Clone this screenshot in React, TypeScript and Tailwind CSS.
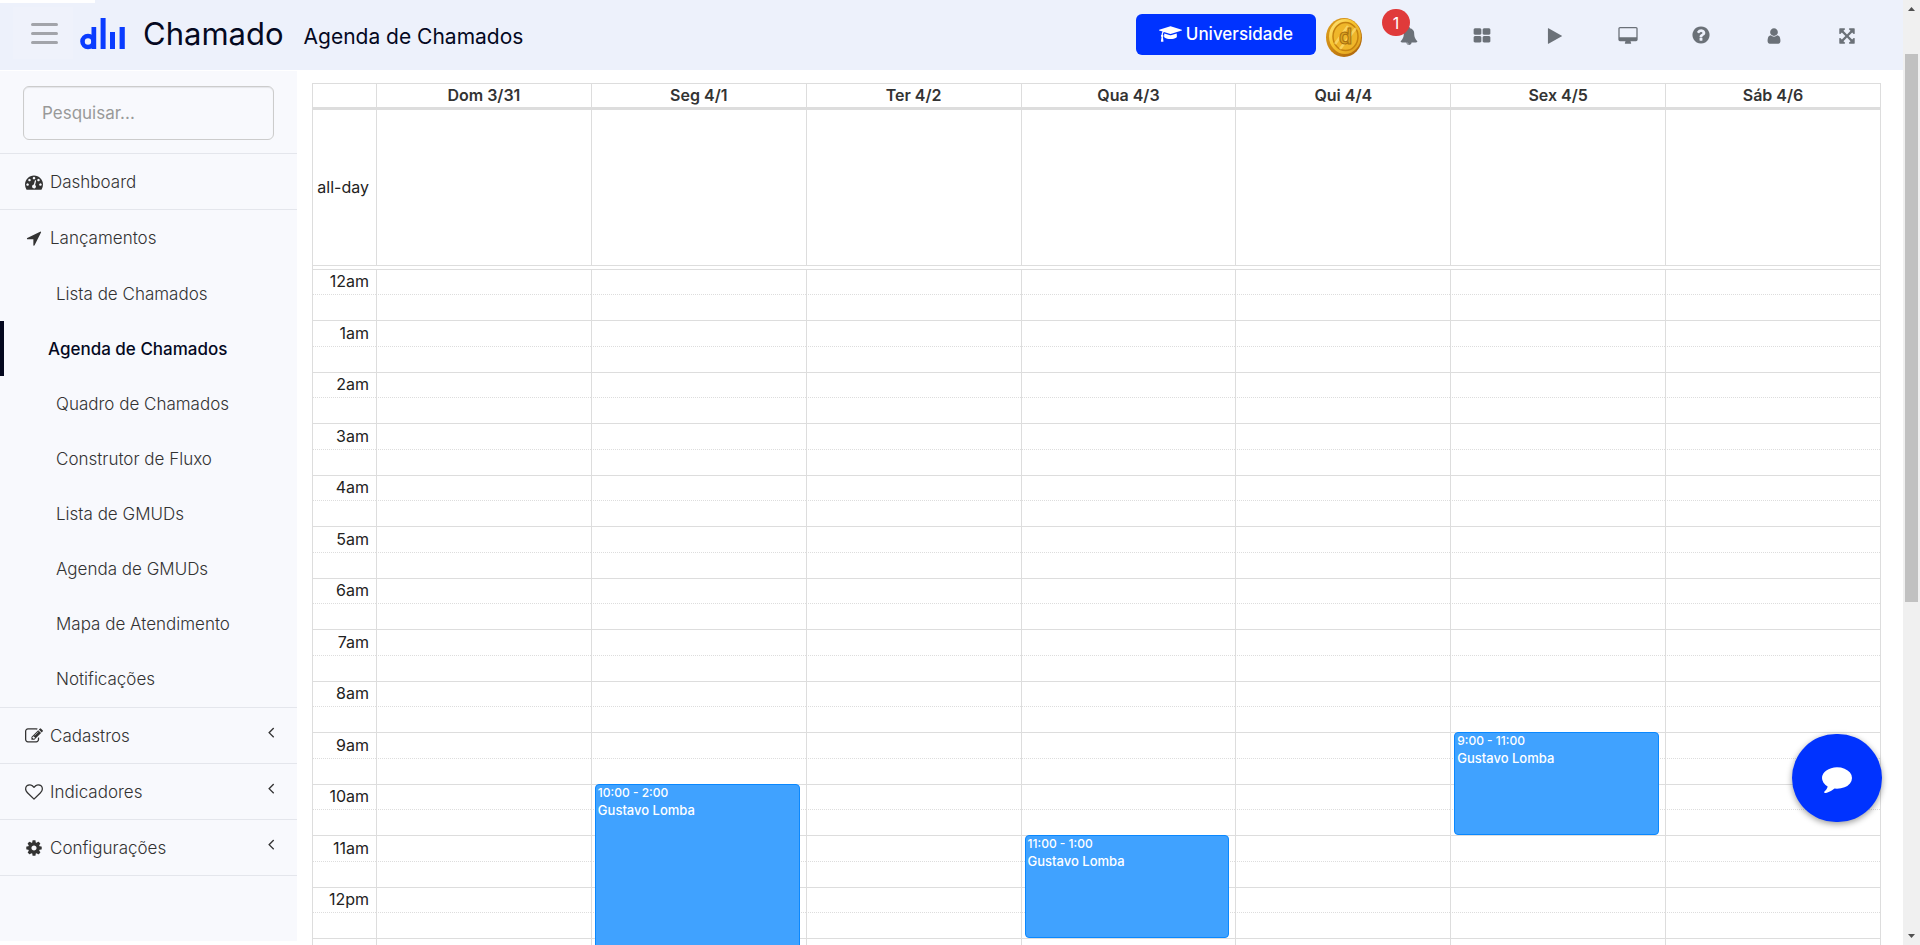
import type { ReactNode } from "react";
import clsx from "clsx";

type IconProps = { d: string; viewBox?: string; className?: string };

function Icon({ d, viewBox = "0 0 1792 1792", className = "size-[18px]" }: IconProps) {
  return (
    <svg viewBox={viewBox} className={clsx("shrink-0 fill-current", className)} aria-hidden="true">
      <path d={d} />
    </svg>
  );
}

const icons = {
  cap: "M1774 836l18 316q4 69-82 128t-235 93.5-323 34.5-323-34.5-235-93.5-82-128l18-316 574 181q22 7 48 7t48-7zm530-324q0 23-22 31l-1120 352q-4 1-10 1t-10-1l-652-206q-43 34-71 111.5t-34 178.5q63 36 63 109 0 69-58 107l58 433q2 14-8 25-9 11-24 11h-192q-15 0-24-11-10-11-8-25l58-433q-58-38-58-107 0-73 65-111 11-207 98-330l-333-104q-22-8-22-31t22-31l1120-352q4-1 10-1t10 1l1120 352q22 8 22 31z",
  bell: "M912 1696q0-16-16-16-59 0-101.5-42.5t-42.5-101.5q0-16-16-16t-16 16q0 73 51.5 124.5t124.5 51.5q16 0 16-16zm816-288q0 52-38 90t-90 38h-448q0 106-75 181t-181 75-181-75-75-181h-448q-52 0-90-38t-38-90q50-42 91-88t85-119.5 74.5-158.5 50-206 19.5-260q0-152 117-282.5t307-158.5q-8-19-8-39 0-40 28-68t68-28 68 28 28 68q0 20-8 39 190 28 307 158.5t117 282.5q0 139 19.5 260t50 206 74.5 158.5 85 119.5 91 88z",
  grid: "M832 1024v384q0 52-38 90t-90 38h-512q-52 0-90-38t-38-90v-384q0-52 38-90t90-38h512q52 0 90 38t38 90zm0-768v384q0 52-38 90t-90 38h-512q-52 0-90-38t-38-90v-384q0-52 38-90t90-38h512q52 0 90 38t38 90zm896 768v384q0 52-38 90t-90 38h-512q-52 0-90-38t-38-90v-384q0-52 38-90t90-38h512q52 0 90 38t38 90zm0-768v384q0 52-38 90t-90 38h-512q-52 0-90-38t-38-90v-384q0-52 38-90t90-38h512q52 0 90 38t38 90z",
  play: "M1576 927l-1328 738q-23 13-39.5 3t-16.5-36v-1472q0-26 16.5-36t39.5 3l1328 738q23 13 23 31t-23 31z",
  desktop: "M1728 992v-832q0-13-9.5-22.5t-22.5-9.5h-1600q-13 0-22.5 9.5t-9.5 22.5v832q0 13 9.5 22.5t22.5 9.5h1600q13 0 22.5-9.5t9.5-22.5zm128-832v1088q0 66-47 113t-113 47h-544q0 37 16 77.5t32 71 16 43.5q0 26-19 45t-45 19h-512q-26 0-45-19t-19-45q0-14 16-44t32-70 16-78h-544q-66 0-113-47t-47-113v-1088q0-66 47-113t113-47h1600q66 0 113 47t47 113z",
  help: "M1024 1376v-192q0-14-9-23t-23-9h-192q-14 0-23 9t-9 23v192q0 14 9 23t23 9h192q14 0 23-9t9-23zm256-672q0-88-55.5-163t-138.5-116-170-41q-243 0-371 213-15 24 8 42l132 100q7 6 19 6 16 0 25-12 53-68 86-92 34-24 86-24 48 0 85.5 26t37.5 59q0 38-20 61t-68 45q-63 28-115.5 86.5t-52.5 125.5v36q0 14 9 23t23 9h192q14 0 23-9t9-23q0-19 21.5-49.5t54.5-49.5q32-18 49-28.5t46-35 44.5-48 28-60.5 12.5-81zm384 192q0 209-103 385.5t-279.5 279.5-385.5 103-385.5-103-279.5-279.5-103-385.5 103-385.5 279.5-279.5 385.5-103 385.5 103 279.5 279.5 103 385.5z",
  user: "M1536 1399q0 109-62.5 187t-150.5 78h-854q-88 0-150.5-78t-62.5-187q0-85 8.5-160.5t31.5-152 58.5-131 94-89 134.5-34.5q131 128 313 128t313-128q76 0 134.5 34.5t94 89 58.5 131 31.5 152 8.5 160.5zm-256-887q0 159-112.5 271.5t-271.5 112.5-271.5-112.5-112.5-271.5 112.5-271.5 271.5-112.5 271.5 112.5 112.5 271.5z",
  expand: "M1411 541l-355 355 355 355 144-144q29-31 70-14 39 17 39 59v448q0 26-19 45t-45 19h-448q-42 0-59-40-17-39 14-69l144-144-355-355-355 355 144 144q31 30 14 69-17 40-59 40h-448q-26 0-45-19t-19-45v-448q0-42 40-59 39-17 69 14l144 144 355-355-355-355-144 144q-19 19-45 19-12 0-24-5-40-17-40-59v-448q0-26 19-45t45-19h448q42 0 59 40 17 39-14 69l-144 144 355 355 355-355-144-144q-31-30-14-69 17-40 59-40h448q26 0 45 19t19 45v448q0 42-39 59-13 5-25 5-26 0-45-19z",
  gauge: "M384 1152q0-53-37.5-90.5t-90.5-37.5-90.5 37.5-37.5 90.5 37.5 90.5 90.5 37.5 90.5-37.5 37.5-90.5zm192-448q0-53-37.5-90.5t-90.5-37.5-90.5 37.5-37.5 90.5 37.5 90.5 90.5 37.5 90.5-37.5 37.5-90.5zm428 481l101-382q6-26-7.5-48.5t-38.5-29.5-48 6.5-30 39.5l-101 382q-60 5-107 43.5t-63 98.5q-20 77 20 146t117 89 146-20 89-117q16-60-6-117t-72-91zm660-33q0-53-37.5-90.5t-90.5-37.5-90.5 37.5-37.5 90.5 37.5 90.5 90.5 37.5 90.5-37.5 37.5-90.5zm-640-640q0-53-37.5-90.5t-90.5-37.5-90.5 37.5-37.5 90.5 37.5 90.5 90.5 37.5 90.5-37.5 37.5-90.5zm448 192q0-53-37.5-90.5t-90.5-37.5-90.5 37.5-37.5 90.5 37.5 90.5 90.5 37.5 90.5-37.5 37.5-90.5zm320 448q0 261-141 483-19 29-54 29h-1402q-35 0-54-29-141-221-141-483 0-182 71-348t191-286 286-191 348-71 348 71 286 191 191 286 71 348z",
  arrow: "M1593 349l-640 1280q-17 35-57 35-5 0-15-2-22-5-35.5-22.5t-13.5-39.5v-576h-576q-22 0-39.5-13.5t-22.5-35.5 4-42 29-30l1280-640q13-7 29-7 27 0 45 19 15 14 18.5 34.5t-6.5 39.5z",
  edit: "M888 1184l116-116-152-152-116 116v56h96v96h56zm440-720q-16-16-33 1l-350 350q-17 17-1 33t33-1l350-350q17-17 1-33zm80 594v190q0 119-84.5 203.5t-203.5 84.5h-832q-119 0-203.5-84.5t-84.5-203.5v-832q0-119 84.5-203.5t203.5-84.5h832q63 0 117 25 15 7 18 23 3 17-9 29l-49 49q-14 14-32 8-23-6-45-6h-832q-66 0-113 47t-47 113v832q0 66 47 113t113 47h832q66 0 113-47t47-113v-126q0-13 9-22l64-64q15-15 35-7t20 29zm-96-738l288 288-672 672h-288v-288zm444 132l-92 92-288-288 92-92q28-28 68-28t68 28l152 152q28 28 28 68t-28 68z",
  heart: "M1664 596q0-81-21.5-143t-55-98.5-81.5-59.5-94-31-98-8-112 25.5-110.5 64-86.5 72-60 61.5q-18 22-49 22t-49-22q-24-28-60-61.5t-86.5-72-110.5-64-112-25.5-98 8-94 31-81.5 59.5-55 98.5-21.5 143q0 168 187 355l581 560 580-559q188-188 188-356zm128 0q0 221-229 450l-623 600q-18 18-44 18t-44-18l-624-602q-10-8-27.5-26t-55.5-65.5-68-97.5-53.5-121-23.5-138q0-220 127-344t351-124q62 0 126.5 21.5t120 58 95.5 68.5 76 68q36-36 76-68t95.5-68.5 120-58 126.5-21.5q224 0 351 124t127 344z",
  cog: "M1152 896q0-106-75-181t-181-75-181 75-75 181 75 181 181 75 181-75 75-181zm512-109v222q0 12-8 23t-20 13l-185 28q-19 54-39 91 35 50 107 138 10 12 10 25t-9 23q-27 37-99 108t-94 71q-12 0-26-9l-138-108q-44 23-91 38-16 136-29 186-7 28-36 28h-222q-14 0-24.5-8.5t-11.5-21.5l-28-184q-49-16-90-37l-141 107q-10 9-25 9-14 0-25-11-126-114-165-168-7-10-7-23 0-12 8-23 15-21 51-66.5t54-70.5q-27-50-41-99l-183-27q-13-2-21-12.5t-8-23.5v-222q0-12 8-23t19-13l186-28q14-46 39-92-40-57-107-138-10-12-10-24 0-10 9-23 26-36 98.5-107.5t94.5-71.5q13 0 26 10l138 107q44-23 91-38 16-136 29-186 7-28 36-28h222q14 0 24.5 8.5t11.5 21.5l28 184q49 16 90 37l142-107q9-9 24-9 13 0 25 10 129 119 165 170 7 8 7 22 0 12-8 23-15 21-51 66.5t-54 70.5q26 50 41 98l183 28q13 2 21 12.5t8 23.5z",
  angleLeft: "M1203 544q0 13-10 23l-393 393 393 393q10 10 10 23t-10 23l-50 50q-10 10-23 10t-23-10l-466-466q-10-10-10-23t10-23l466-466q10-10 23-10t23 10l50 50q10 10 10 23z",
  comment: "M1792 896q0 174-120 321.5t-326 233-450 85.5q-70 0-145-8-198 175-460 242-49 14-114 22-17 2-30.5-9t-17.5-29v-1q-3-4-.5-12t2-10 4.5-9.5l6-9 7-8.5 8-9q7-8 31-34.5t34.5-38 31-39.5 32.5-51 27-59 26-76q-157-89-247.5-220t-90.5-281q0-130 71-248.5t191-204.5 286-136.5 348-50.5q244 0 450 85.5t326 233 120 321.5z",
};

const days = ["Dom 3/31", "Seg 4/1", "Ter 4/2", "Qua 4/3", "Qui 4/4", "Sex 4/5", "Sáb 4/6"];

const events = [
  { day: 1, start: 10, hours: 4, time: "10:00 - 2:00", title: "Gustavo Lomba" },
  { day: 3, start: 11, hours: 2, time: "11:00 - 1:00", title: "Gustavo Lomba" },
  { day: 5, start: 9, hours: 2, time: "9:00 - 11:00", title: "Gustavo Lomba" },
];

// half-hour slots, the last one only closes the 12pm row
const slots = Array.from({ length: 27 }, (_, i) => i);

// two hours of slots take 103px
const slotHeights = ["h-[25px]", "h-[26px]", "h-[26px]", "h-[26px]"];

const launches = [
  "Lista de Chamados",
  "Agenda de Chamados",
  "Quadro de Chamados",
  "Construtor de Fluxo",
  "Lista de GMUDs",
  "Agenda de GMUDs",
  "Mapa de Atendimento",
  "Notificações",
];

const actions = [
  { label: "Painel", d: icons.grid },
  { label: "Iniciar", d: icons.play },
  { label: "Monitor", d: icons.desktop, viewBox: "-64 0 1920 1792", size: "h-[18px] w-[20px]" },
  { label: "Ajuda", d: icons.help, size: "size-5 mb-0.5" },
  { label: "Perfil", d: icons.user },
  { label: "Tela cheia", d: icons.expand },
];

function hourLabel(h: number) {
  return `${h % 12 || 12}${h < 12 ? "am" : "pm"}`;
}

function Logo() {
  return (
    <svg viewBox="0 0 46 34" className="h-[34px] w-[46px]" aria-hidden="true">
      <circle cx="8" cy="24.5" r="5.5" fill="none" stroke="#0a3cff" strokeWidth="4.6" />
      <path d="M11.5 10h4.7v22h-4.7zM20.6 1h5v31h-5zM30 15h5v17h-5zM39.6 10h5.2v22h-5.2z" fill="#0a3cff" />
    </svg>
  );
}

function Coin() {
  return (
    <svg viewBox="0 0 36 40" className="h-10 w-9" aria-hidden="true">
      <defs>
        <linearGradient id="coin-rim" x1="0" y1="0" x2="1" y2="1">
          <stop offset="0" stopColor="#e3a51f" />
          <stop offset="0.5" stopColor="#c98313" />
          <stop offset="1" stopColor="#a8600a" />
        </linearGradient>
        <linearGradient id="coin-face" x1="0" y1="0" x2="1" y2="1">
          <stop offset="0" stopColor="#ffe98a" />
          <stop offset="0.4" stopColor="#f8c630" />
          <stop offset="1" stopColor="#dd9a1c" />
        </linearGradient>
      </defs>
      <ellipse cx="18" cy="20.5" rx="18" ry="19.5" fill="url(#coin-rim)" />
      <ellipse cx="19" cy="19.5" rx="16" ry="17.5" fill="url(#coin-face)" />
      <ellipse cx="19.5" cy="19.5" rx="12.5" ry="14" fill="#efb62a" stroke="#c5820f" strokeWidth="1.5" />
      <path d="M9 27l13-18M14 32l16-21" stroke="#ffe680" strokeWidth="2.5" opacity="0.6" />
      <text x="19.5" y="27" textAnchor="middle" fontFamily="Inter, sans-serif" fontSize="21" fontWeight="600" fill="#dca321" stroke="#a8700e" strokeWidth="1">
        d
      </text>
    </svg>
  );
}

function Header() {
  return (
    <header className="relative flex h-[70px] shrink-0 items-center bg-[#edf1fb] pl-[13px] pr-5 text-[#05091f]">
      <span className="absolute left-0 top-0 h-[3px] w-[95px] bg-white" />
      <button aria-label="Menu" className="mb-1 flex h-[52px] w-[60px] flex-col justify-center gap-1.5 bg-[#eff2fb] pl-[18px]">
        <span className="h-[3px] w-[27px] rounded-full bg-[#a2a4aa]" />
        <span className="h-[3px] w-[27px] rounded-full bg-[#a2a4aa]" />
        <span className="h-[3px] w-[27px] rounded-full bg-[#a2a4aa]" />
      </button>
      <a href="#" className="mb-0.5 ml-[7px] flex items-center gap-[17px]">
        <Logo />
        <span className="text-[31px] leading-10">Chamado</span>
      </a>
      <h1 className="ml-5 pt-1 text-[21px] leading-8">Agenda de Chamados</h1>

      <div className="ml-auto flex h-full items-center">
        <button className="mb-0.5 flex h-[41px] items-center gap-1 rounded-md bg-[#0033ff] px-[23px] text-[17px] font-medium text-white">
          <Icon d={icons.cap} viewBox="0 0 2304 1792" className="h-[18px] w-[23px]" />
          <span className="pt-0.5">Universidade</span>
        </button>
        <button aria-label="Moedas" className="mx-2.5 pt-1">
          <Coin />
        </button>
        <button aria-label="Notificações" className="relative flex h-full w-[73px] items-center justify-center pt-0.5 text-[#6b7178]">
          <Icon d={icons.bell} />
          <span className="absolute left-2.5 top-[9px] flex h-[27px] w-7 items-center justify-center rounded-full bg-[#e03a3a] text-base text-white">
            1
          </span>
        </button>
        {actions.map((a) => (
          <button key={a.label} aria-label={a.label} className="flex h-full w-[73px] items-center justify-center pt-0.5 text-[#6b7178]">
            <Icon d={a.d} viewBox={a.viewBox} className={a.size} />
          </button>
        ))}
      </div>
    </header>
  );
}

function MenuItem({ icon, label, chevron, children }: { icon: string; label: string; chevron?: boolean; children?: ReactNode }) {
  return (
    <li className="border-b border-[#e4e6ec]">
      <a href="#" className="flex h-[55px] items-center gap-[7px] pl-[25px] pr-[17px]">
        <Icon d={icon} />
        <span className="pt-0.5">{label}</span>
        {chevron && <Icon d={icons.angleLeft} className="mb-2 ml-auto size-[18px]" />}
      </a>
      {children}
    </li>
  );
}

function Sidebar() {
  return (
    <aside className="mb-1 mt-px w-[297px] shrink-0 bg-[#f8f9fd] text-[17px] font-light text-[#333]">
      <div className="border-b border-[#e4e6ec] px-[23px] pb-[13px] pt-[15px]">
        <input
          type="text"
          aria-label="Pesquisar"
          placeholder="Pesquisar..."
          className="h-[54px] w-full rounded-md border border-[#ccc] bg-transparent px-[18px] font-normal shadow-[inset_0_1px_1px_rgba(0,0,0,0.08)] placeholder:text-[#999]"
        />
      </div>
      <nav>
        <ul>
          <MenuItem icon={icons.gauge} label="Dashboard" />
          <MenuItem icon={icons.arrow} label="Lançamentos">
            <ul className="py-px">
              {launches.map((item, i) => (
                <li key={item}>
                  <a
                    href="#"
                    className={clsx(
                      "flex h-[55px] items-center pt-0.5",
                      i === 1 ? "border-l-4 border-[#05091f] pl-11 font-medium text-[#05091f]" : "pl-14"
                    )}
                  >
                    {item}
                  </a>
                </li>
              ))}
            </ul>
          </MenuItem>
          <MenuItem icon={icons.edit} label="Cadastros" chevron />
          <MenuItem icon={icons.heart} label="Indicadores" chevron />
          <MenuItem icon={icons.cog} label="Configurações" chevron />
        </ul>
      </nav>
    </aside>
  );
}

function Calendar() {
  return (
    <table className="w-full table-fixed border-separate border-spacing-0 border-r border-[#ddd] text-base text-[#222]">
      <colgroup>
        <col className="w-16" />
        {days.map((d) => (
          <col key={d} />
        ))}
      </colgroup>
      <thead>
        <tr>
          <td className="h-6 border-l border-t border-[#ddd] p-0" />
          {days.map((d) => (
            <th key={d} scope="col" className="h-6 border-l border-t border-[#ddd] p-0 pb-0.5 font-semibold leading-5 text-[#333]">
              {d}
            </th>
          ))}
        </tr>
      </thead>
      <tbody>
        <tr>
          <th scope="row" className="h-[158px] border-l border-t-3 border-[#ddd] p-0 pb-0.5 pr-[7px] text-right font-normal">
            all-day
          </th>
          {days.map((d) => (
            <td key={d} className="border-l border-t-3 border-[#ddd] p-0" />
          ))}
        </tr>
        <tr>
          <td colSpan={8} className="h-1 border-l border-t border-[#ddd] p-0" />
        </tr>
        {slots.map((s) => {
          const half = s % 2 === 1;
          const cell = clsx("border-l border-t border-[#ddd] p-0", half && "[border-top-style:dotted]");
          return (
            <tr key={s}>
              <th scope="row" className={clsx(cell, slotHeights[s % 4], "pb-0.5 pr-[7px] text-right font-normal leading-[22px]")}>
                {!half && s < 26 && hourLabel(s / 2)}
              </th>
              {days.map((d, col) => {
                const ev = events.find((e) => e.day === col && e.start * 2 === s);
                return (
                  <td key={d} className={clsx(cell, "relative")}>
                    {ev && (
                      <a
                        href="#"
                        className="absolute -top-px left-[3px] right-[6px] z-10 rounded border border-[#0a88ff] bg-[#40a2ff] px-0.5 font-medium text-white"
                        style={{ height: Math.round(ev.hours * 51.5) }}
                      >
                        <span className="block text-xs leading-[15px]">{ev.time}</span>
                        <span className="block text-[13px] leading-5">{ev.title}</span>
                      </a>
                    )}
                  </td>
                );
              })}
            </tr>
          );
        })}
      </tbody>
    </table>
  );
}

function ScrollRail() {
  return (
    <div className="flex w-[17px] shrink-0 flex-col items-center bg-[#f0f0f0] py-[7px]" aria-hidden="true">
      <svg viewBox="0 0 7 4" className="h-1 w-[7px] fill-[#505050]">
        <path d="M0 4L3.5 0L7 4z" />
      </svg>
      <div className="mt-[43px] h-[548px] w-[13px] bg-[#c1c1c1]" />
      <svg viewBox="0 0 7 4" className="mt-auto h-1 w-[7px] fill-[#505050]">
        <path d="M0 0L3.5 4L7 0z" />
      </svg>
    </div>
  );
}

export default function App() {
  return (
    <div className="flex h-screen overflow-hidden bg-white font-[Inter,sans-serif]">
      <div className="flex min-w-0 flex-1 flex-col">
        <Header />
        <div className="flex min-h-0 flex-1">
          <Sidebar />
          <main className="min-w-0 flex-1 overflow-hidden pl-[15px] pr-[22px] pt-[13px]">
            <Calendar />
          </main>
        </div>
      </div>
      <ScrollRail />
      <button
        aria-label="Chat"
        className="fixed bottom-[123px] right-[38px] z-20 flex h-[88px] w-[90px] items-center justify-center rounded-full bg-[#0033ff] text-white shadow-[0_2px_6px_rgba(0,0,0,0.4)]"
      >
        <Icon d={icons.comment} className="size-[30px]" />
      </button>
    </div>
  );
}
